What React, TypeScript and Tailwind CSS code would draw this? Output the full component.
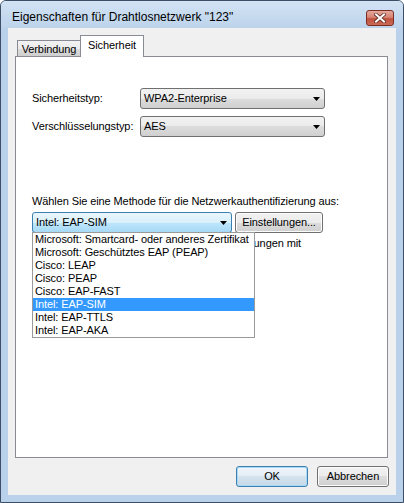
import React from "react";

const F = { fontFamily: '"Liberation Sans", Arial, sans-serif' };

function Arrow() {
  return (
    <svg width="7" height="4" viewBox="0 0 7 4" className="block">
      <path d="M0 0H7L3.5 4Z" fill="#000" />
    </svg>
  );
}

function Combo({ value, width, focused }: { value: string; width: string; focused?: boolean }) {
  const cls = focused
    ? "border-[#3c7fb1] bg-[linear-gradient(to_bottom,#eaf6fd_0%,#d9f0fc_50%,#bee6fd_50%,#a7d9f5_100%)]"
    : "border-[#707070] bg-[linear-gradient(to_bottom,#f2f2f2_0%,#ebebeb_50%,#dddddd_50%,#cfcfcf_100%)]";
  return (
    <div className={`${width} h-[21px] flex items-center justify-between border rounded-[3px] pl-[3px] pr-[4px] ${cls}`}>
      <span className="text-[11px] leading-[13px] text-black">{value}</span>
      <Arrow />
    </div>
  );
}

function Btn({ label, width, def }: { label: string; width: string; def?: boolean }) {
  const cls = def
    ? "border-[#3c7fb1] bg-[linear-gradient(to_bottom,#f0f6fa_0%,#e3edf4_50%,#d4e3ee_50%,#c6dae8_100%)] shadow-[inset_0_0_0_1px_#a8daf5]"
    : "border-[#707070] bg-[linear-gradient(to_bottom,#f2f2f2_0%,#ebebeb_50%,#dddddd_50%,#cfcfcf_100%)] shadow-[inset_0_0_0_1px_#fcfcfc]";
  return (
    <div className={`${width} h-[21px] flex items-center justify-center border rounded-[3px] text-[11px] leading-[13px] text-black ${cls}`}>
      {label}
    </div>
  );
}

const items = [
  "Microsoft: Smartcard- oder anderes Zertifikat",
  "Microsoft: Geschütztes EAP (PEAP)",
  "Cisco: LEAP",
  "Cisco: PEAP",
  "Cisco: EAP-FAST",
  "Intel: EAP-SIM",
  "Intel: EAP-TTLS",
  "Intel: EAP-AKA",
];

export default function App() {
  return (
    <div style={F} className="w-[404px] h-[503px] flex flex-col border border-[#3d4f66] rounded-t-[6px] bg-[#b9d1ea] overflow-hidden tracking-[-0.1px]">
      {/* title bar */}
      <div className="h-[27px] flex items-start justify-between bg-[linear-gradient(to_bottom,#d3e3f4,#bcd3eb)] pl-[11px] pr-[9px]">
        <span className="mt-[9px] text-[12px] leading-[15px] text-black tracking-normal">Eigenschaften für Drahtlosnetzwerk "123"</span>
        <div className="mt-[9px] w-[28px] h-[16px] rounded-[3px] border border-[#7a2d22] bg-[linear-gradient(to_bottom,#e6a89b_0%,#d78474_45%,#c0513e_55%,#cc6a55_100%)] flex items-center justify-center">
          <svg width="12" height="10" viewBox="0 0 12 10">
            <path d="M2 1.5L10 8.5M10 1.5L2 8.5" stroke="#5a2a22" strokeWidth="3.6" strokeLinecap="square" />
            <path d="M2 1.5L10 8.5M10 1.5L2 8.5" stroke="#ffffff" strokeWidth="2" strokeLinecap="square" />
          </svg>
        </div>
      </div>
      {/* client */}
      <div className="flex-1 mx-[7px] mb-[7px] bg-[#f0f0f0] flex flex-col pt-[7px]">
        {/* tabs */}
        <div className="h-[21px] flex items-end pl-[9px]">
          <div className="w-[64px] h-[16px] border border-b-0 border-[#898c95] bg-[linear-gradient(to_bottom,#f2f2f2_0%,#ebebeb_50%,#dddddd_50%,#cfcfcf_100%)] flex items-start justify-center pt-[2px] text-[11px] leading-[13px] text-black">
            Verbindung
          </div>
          <div className="relative z-10 -ml-px -mb-px w-[64px] h-[22px] border border-b-0 border-[#898c95] bg-white flex items-start justify-center pt-[3px] text-[11px] leading-[13px] text-black">
            Sicherheit
          </div>
        </div>
        {/* panel */}
        <div className="relative ml-[7px] w-[373px] h-[402px] border border-[#898c95] bg-white">
          <div className="flex flex-col pl-[16px] pt-[31px]">
            <div className="flex items-center h-[21px]">
              <span className="w-[108px] text-[11px] leading-[13px] text-black">Sicherheitstyp:</span>
              <Combo value="WPA2-Enterprise" width="w-[185px]" />
            </div>
            <div className="flex items-center h-[21px] mt-[7px]">
              <span className="w-[108px] text-[11px] leading-[13px] text-black">Verschlüsselungstyp:</span>
              <Combo value="AES" width="w-[185px]" />
            </div>
            <div className="mt-[58px] text-[11px] leading-[13px] text-black">
              Wählen Sie eine Methode für die Netzwerkauthentifizierung aus:
            </div>
            <div className="flex items-center gap-[3px] mt-[4px]">
              <Combo value="Intel: EAP-SIM" width="w-[200px]" focused />
              <Btn label="Einstellungen..." width="w-[88px]" />
            </div>
            <div className="flex items-start mt-[4px] gap-[6px]">
              <div className="invisible mt-[1px] w-[13px] h-[13px] border border-[#8e8f8f] bg-white" />
              <div className="w-[260px] text-[11px] leading-[13px] text-black">
                <span className="invisible">Benutzerinformationen für spätere Verbind</span>
                <span>ungen mit</span>
                <span className="invisible"> diesem Netzwerk speichern</span>
              </div>
            </div>
          </div>
          {/* dropdown list */}
          <div className="absolute left-[16px] top-[175px] w-[223px] h-[106px] border border-[#9a9a9a] bg-white z-20">
            {items.map((t) => (
              <div
                key={t}
                className={`h-[13px] pl-[2px] text-[11px] leading-[13px] whitespace-nowrap ${t === "Intel: EAP-SIM" ? "bg-[#3399ff] text-white" : "text-black"}`}
              >
                {t}
              </div>
            ))}
          </div>
        </div>
        {/* buttons */}
        <div className="flex justify-end gap-[9px] pr-[7px] mt-[8px]">
          <Btn label="OK" width="w-[72px]" def />
          <Btn label="Abbrechen" width="w-[72px]" />
        </div>
      </div>
    </div>
  );
}
